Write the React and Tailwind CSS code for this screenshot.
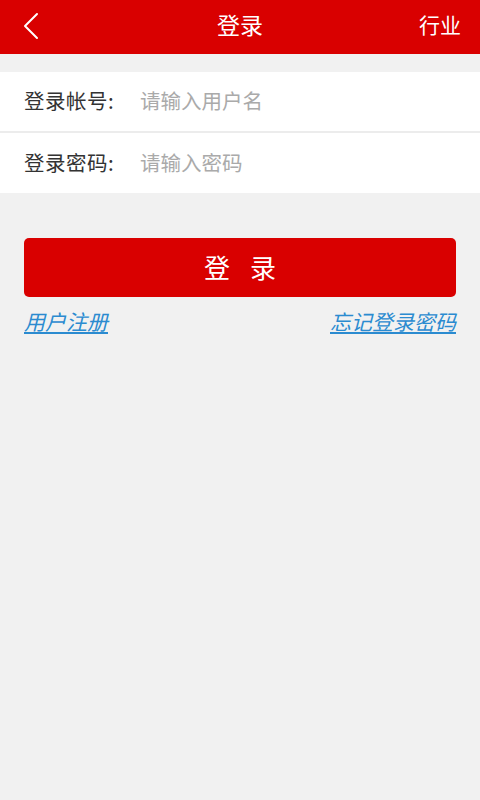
import React from "react";

export default function App() {
  const font = { fontFamily: '"Noto Sans CJK SC", "Noto Sans", sans-serif' };
  return (
    <div className="w-[480px] h-[800px] bg-[#f1f1f1] flex flex-col" style={font}>
      <div className="h-[54px] bg-[#d90000] flex items-center justify-between pl-[22px] pr-[19px] relative">
        <svg width="18" height="28" viewBox="0 0 18 28" className="mb-[2px]">
          <path d="M15 2 L3 14 L15 26" fill="none" stroke="white" strokeWidth="2" strokeLinecap="round" strokeLinejoin="round" />
        </svg>
        <div className="absolute left-0 right-0 top-0 h-[48px] flex items-center justify-center text-white text-[23px] pointer-events-none">登录</div>
        <div className="text-white text-[21px] leading-none mb-[5px]">行业</div>
      </div>
      <div className="mt-[18px] flex flex-col gap-[2px] bg-[#ececec]">
        <div className="h-[59px] bg-white flex items-center pl-[24px] pb-[2px]">
          <span className="w-[116px] text-[20.5px] text-[#333] tracking-[0.5px]">登录帐号:</span>
          <span className="text-[20.5px] text-[#aaaaaa]">请输入用户名</span>
        </div>
        <div className="h-[60px] bg-white flex items-center pl-[24px] pb-[2px]">
          <span className="w-[116px] text-[20.5px] text-[#333] tracking-[0.5px]">登录密码:</span>
          <span className="text-[20.5px] text-[#aaaaaa]">请输入密码</span>
        </div>
      </div>
      <div className="px-[24px] mt-[45px]">
        <div className="h-[59px] bg-[#d90000] rounded-[5px] flex items-center justify-center text-white text-[26px] tracking-[20px] pl-[20px] pb-[2px]">登录</div>
        <div className="flex justify-between mt-[9px]">
          <span className="text-[21px] italic underline text-[#2b8bd0]">用户注册</span>
          <span className="text-[21px] italic underline text-[#2b8bd0]">忘记登录密码</span>
        </div>
      </div>
    </div>
  );
}
